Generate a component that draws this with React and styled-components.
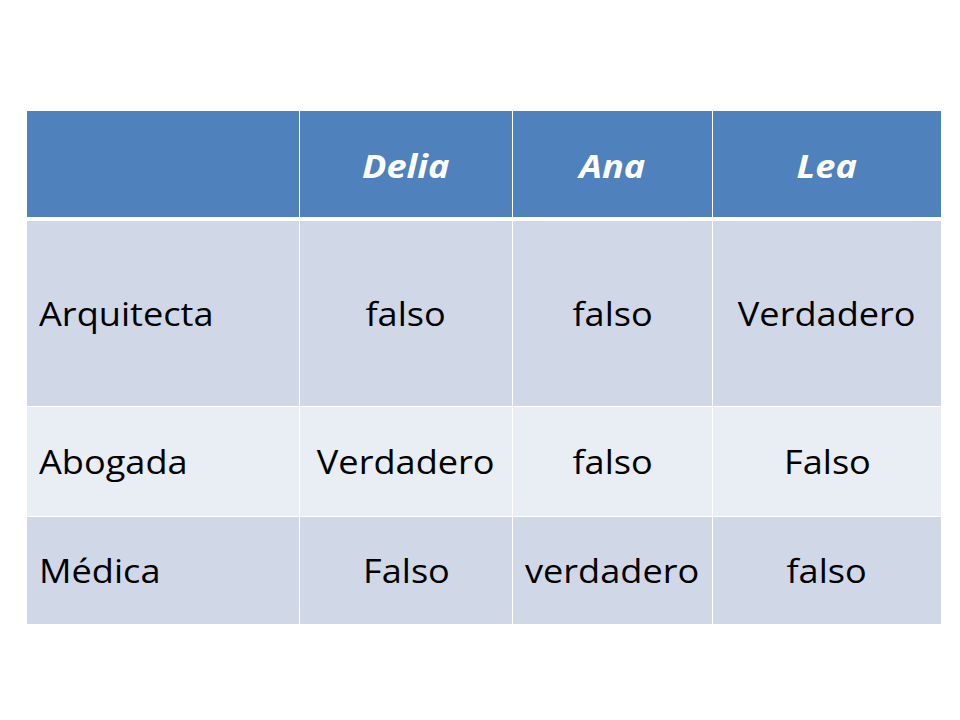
import React from 'react'
import styled, { createGlobalStyle } from 'styled-components'

const GlobalStyle = createGlobalStyle`
  body {
    margin: 0;
    background: #ffffff;
    font-family: "Open Sans", "Liberation Sans", sans-serif;
  }
`

const Page = styled.div`
  width: 960px;
  height: 720px;
  padding: 111px 0 0 27px;
  box-sizing: border-box;
`

const Table = styled.div`
  display: grid;
  grid-template-columns: 272px 212px 199px 228px;
  grid-template-rows: 109px 185px 109px 107px;
  column-gap: 1px;
  row-gap: 1px;
  width: 914px;
  background: #ffffff;
`

const Cell = styled.div`
  display: flex;
  align-items: center;
  justify-content: ${p => (p.$first ? 'flex-start' : 'center')};
  padding-left: ${p => (p.$first ? '12px' : '0')};
  box-sizing: border-box;
  background: ${p => (p.$light ? '#e9edf4' : '#d0d8e8')};
  color: #000000;
  font-size: 32px;
  font-weight: 500;
  white-space: nowrap;
`

const HeadCell = styled.div`
  display: flex;
  align-items: center;
  justify-content: center;
  box-sizing: border-box;
  background: #4f81bd;
  border-bottom: 3px solid #ffffff;
  padding-top: 2px;
  color: #ffffff;
  font-size: 32px;
  font-weight: 700;
  font-style: italic;
`

// the slide text is stretched sideways, as on the original deck
const Wide = styled.span`
  display: inline-block;
  transform: scaleX(1.13);
  transform-origin: ${p => (p.$left ? 'left center' : 'center')};
`

const people = ['Delia', 'Ana', 'Lea']

const rows = [
  ['Arquitecta', 'falso', 'falso', 'Verdadero'],
  ['Abogada', 'Verdadero', 'falso', 'Falso'],
  ['Médica', 'Falso', 'verdadero', 'falso'],
]

const App = () => {
  return (
    <>
      <GlobalStyle />
      <Page>
        <Table>
          <HeadCell />
          {people.map(name => (
            <HeadCell key={name}>
              <Wide>{name}</Wide>
            </HeadCell>
          ))}
          {rows.map((row, i) =>
            row.map((value, j) => (
              <Cell key={`${i}-${j}`} $first={j === 0} $light={i === 1}>
                <Wide $left={j === 0}>{value}</Wide>
              </Cell>
            ))
          )}
        </Table>
      </Page>
    </>
  )
}

export default App
